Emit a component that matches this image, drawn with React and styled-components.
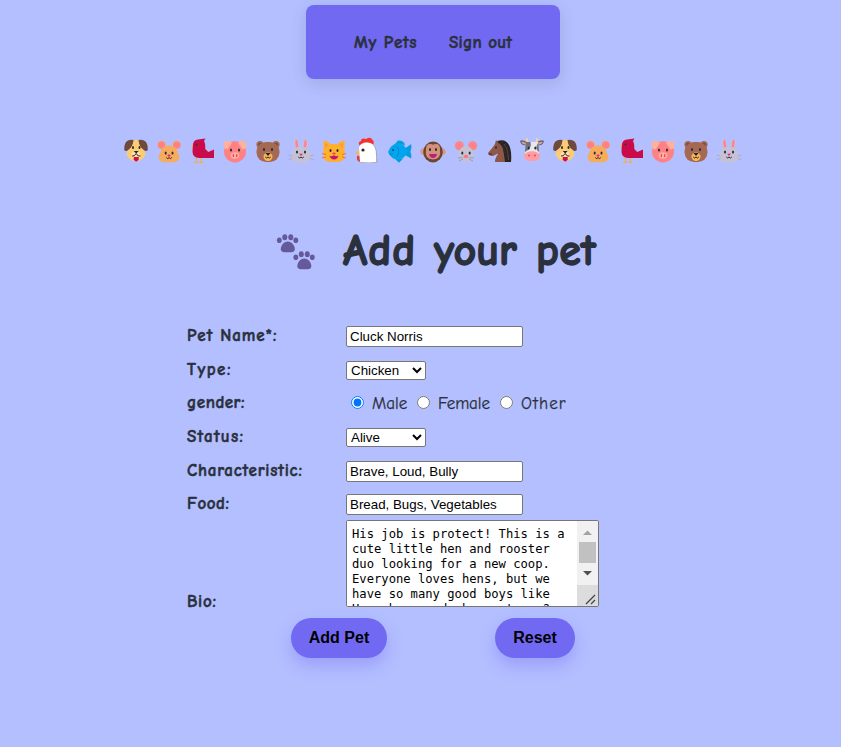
import React from "react";
import styled, { createGlobalStyle } from "styled-components";

const GlobalStyle = createGlobalStyle`
  * { box-sizing: border-box; }
  body {
    margin: 0;
    background: #b3bfff;
    color: #2a303c;
    font-family: "Comic Sans MS", "Comic Neue", "Noto Sans", sans-serif;
    font-size: 17px;
    overflow: hidden;
  }
`;

const Page = styled.div`
  display: flex;
  flex-direction: column;
  height: 747px;
  padding-top: 5px;
`;

const Nav = styled.nav`
  display: flex;
  gap: 32px;
  width: 254px;
  height: 74px;
  margin-left: 306px;
  padding: 28px 0 0 48px;
  border-radius: 8px;
  background: #7269f3;
  box-shadow: 0 4px 16px rgba(60, 60, 80, 0.16);
`;

const NavLink = styled.a`
  width: 63px;
  font-size: 17px;
  font-weight: 700;
  line-height: 20px;
  white-space: nowrap;
  letter-spacing: ${(p) => p.$track || 0}px;
  -webkit-text-stroke: 0.5px currentColor;
`;

const Animals = styled.div`
  display: flex;
  margin: 60px 0 0 120px;
  height: 24px;
`;

const Cell = styled.span`
  flex: none;
  display: flex;
  justify-content: center;
  width: 32.94px;

  svg { display: block; overflow: visible; }
`;

const TitleRow = styled.header`
  display: flex;
  align-items: flex-start;
  height: 60px;
  margin: 56px 0 0 276px;

  svg { margin-top: 15px; }
`;

const Title = styled.h1`
  display: flex;
  margin: 0 0 0 27px;
  font-size: 44px;
  line-height: 64px;
  font-weight: 700;
  -webkit-text-stroke: 1.3px currentColor;
`;

const Word = styled.span`
  width: ${(p) => p.$width}px;
  letter-spacing: ${(p) => p.$track || 0}px;
`;

const Form = styled.form`
  display: grid;
  grid-template-columns: 159px 260px;
  grid-template-rows: 33.5px 33.5px 33.5px 34px 33px 31px 90px;
  margin: 41px 0 0 187px;
`;

const Label = styled.label`
  align-self: ${(p) => (p.$bottom ? "end" : "start")};
  margin-top: 6px;
  margin-bottom: ${(p) => (p.$bottom ? -3 : 0)}px;
  font-size: 17px;
  font-weight: 700;
  line-height: 20px;
  white-space: nowrap;
  letter-spacing: ${(p) => p.$track || 0}px;
  -webkit-text-stroke: 0.5px currentColor;
`;

const Input = styled.input`
  width: 177px;
  height: 21px;
  margin: 6px 0 0;
  padding: 1px 2px 1px 3px;
  border: 1px solid #767676;
  border-radius: 2px;
  color: #000;
  font: 13.333px "Liberation Sans", Arial, sans-serif;
`;

const Select = styled.select`
  width: 80px;
  height: 19px;
  margin: 7px 0 0;
  border: 1px solid #767676;
  border-radius: 2px;
  background: #fff;
  color: #000;
  font: 13.333px "Liberation Sans", Arial, sans-serif;
`;

const Radios = styled.div`
  display: flex;
  padding-top: 6px;
  line-height: 22px;
`;

const Choice = styled.label`
  display: flex;
  width: ${(p) => p.$width}px;
  letter-spacing: ${(p) => p.$track || 0}px;
  -webkit-text-stroke: 0.25px currentColor;

  input { flex: none; width: 13px; height: 13px; margin: 3px 8px 0 5px; }
`;

const BioBox = styled.div`
  display: flex;
  width: 253px;
  height: 87px;
  margin-top: 1px;
  border: 1px solid #767676;
  border-radius: 2px;
  background: #fff;
  overflow: hidden;
`;

const BioText = styled.textarea`
  width: 230px;
  height: 85px;
  padding: 6px 0 0 5px;
  border: 0;
  outline: 0;
  resize: none;
  overflow: hidden;
  background: #fff;
  color: #000;
  font: 12.18px/15px "DejaVu Sans Mono", monospace;
  white-space: pre;
`;

const ScrollBar = styled.div`
  display: flex;
  flex-direction: column;
  align-items: center;
  width: 21px;
  background: #f1f1f1;

  svg { display: block; flex: none; }
`;

const Thumb = styled.div`
  width: 17px;
  height: 21px;
  background: #c1c1c1;
`;

const Grip = styled.div`
  width: 21px;
  height: 21px;
  background: #dcdcdc;
`;

const Actions = styled.div`
  display: flex;
  gap: 108px;
  margin: 9px 0 0 291px;
`;

const Button = styled.button`
  width: ${(p) => p.$width}px;
  height: 40px;
  padding: 0;
  border: 0;
  border-radius: 20px;
  background: #7269f3;
  box-shadow: 0 8px 16px rgba(114, 105, 243, 0.36);
  color: #000;
  font: 700 16px "Liberation Sans", Arial, sans-serif;
`;

const eyes = (a, b, y) => (
  <g fill="#252a31">
    <ellipse cx={a} cy={y} rx="1" ry="1.5" />
    <ellipse cx={b} cy={y} rx="1" ry="1.5" />
  </g>
);
const mouth = (y) => (
  <path d={`M9.3 ${y}q1.5 2 2.7 0q1.4 2 2.8 0`} fill="none" stroke="#2b2929" strokeWidth="1" />
);

const drawings = {
  dog: (
    <>
      <path d="M5 4Q7 1 12 1t7 3l2.500 12q-3 6-9.500 6T2.500 16Z" fill="#fccb76" />
      <path d="M9.500 1Q5 0 2.500 2.500 0 5 .2 11q2 2 4 0Q9 8 9.500 1M14.500 1q4.500-1 7 1.500Q24 5 23.800 11q-2 2-4 0Q15 8 14.500 1" fill="#6d4a3c" />
      <path d="M7.500 15q1-3.500 4.500-3.500t4.500 3.500v4q-4.500 3-9 0Z" fill="#ffe0a2" />
      {eyes(9, 15.5, 8.5)}
      <path d="M9.700 12h5L12.200 14.500Z" fill="#252525" />
      <path d="M8 17q2 1 4.200-2.500Q14 18 16.500 17" fill="none" stroke="#2d2929" />
      <path d="M9.700 18h5v2.600q-2.500 4-5 0Z" fill="#d40e44" />
    </>
  ),
  hamster: (
    <>
      <circle cx="4.700" cy="6" r="4.200" fill="#f9aa62" />
      <circle cx="19.700" cy="6" r="4.200" fill="#f9aa62" />
      <circle cx="4.500" cy="6" r="3.600" fill="#ff8181" />
      <circle cx="19.800" cy="6" r="3.600" fill="#ff8181" />
      <path d="M5 10q2-3.500 7-3.500t7 3.500l3.500 7q0 6.300-6.500 6.300H8q-6.500 0-6.500-6.300Z" fill="#f5ad5d" />
      {eyes(8.7, 15.5, 14)}
      <ellipse cx="12" cy="16.600" rx="1.600" ry="1.100" fill="#f52084" />
      {mouth(18.6)}
    </>
  ),
  bird: (
    <>
      <path d="M6.500 19v4M11.500 19v4M4 23.300h4M9 23.300h4.500" stroke="#f2ae49" strokeWidth="1.200" />
      <path d="M3 4.500.8 7.500l2.400.4Z" fill="#ffc247" />
      <path d="M2.800 6.500Q3 1 8 .4L15.500-.5 14 2q1.500 2.500 1.300 8l3 3 5.700-2.500V19H9q-6.500 0-6.500-6.500Z" fill="#ca0b4a" />
      <circle cx="6.500" cy="5.500" r="1" fill="#42283b" />
    </>
  ),
  pig: (
    <>
      <ellipse cx="12" cy="12.800" rx="11" ry="10.600" fill="#ff8184" />
      <path d="M1.200 2.500Q6 1 9 4L4.500 10.500Q-1 10 1.200 2.500M22.800 2.500Q18 1 15 4l4.500 6.500q5.500-.5 3.300-8" fill="#ffb19c" />
      {eyes(8, 16, 11)}
      <ellipse cx="12" cy="16.500" rx="4.300" ry="3.300" fill="#ffb19c" />
      <path d="M10.400 15.300v2.600M13.700 15.300v2.600" stroke="#e93672" strokeWidth="1.200" />
    </>
  ),
  bear: (
    <>
      <circle cx="4" cy="5.500" r="3.600" fill="#a56953" />
      <circle cx="20" cy="5.500" r="3.600" fill="#a56953" />
      <circle cx="4" cy="5.500" r="1.800" fill="#6d4a3c" />
      <circle cx="20" cy="5.500" r="1.800" fill="#6d4a3c" />
      <rect x=".5" y="3" width="23" height="20" rx="9.500" fill="#a56953" />
      <ellipse cx="12" cy="17.800" rx="4.500" ry="4.200" fill="#f9b45c" />
      {eyes(8, 16, 10.5)}
      <path d="M9.500 14h5L12 17Z" fill="#212121" />
      {mouth(18)}
    </>
  ),
  rabbit: (
    <>
      <path d="M6 9Q4 0 7 0q3 1 3.200 9M18 9Q20 0 17 0q-3 1-3.200 9" fill="#c8c4d9" />
      <path d="M6.800 8.500Q5.500.5 7.400.5 9.300 2 9.300 8.500M17.200 8.500q1.300-8-.6-8Q14.700 2 14.700 8.500" fill="#ff8392" />
      <path d="M2 16q2-8 10-8t10 8q0 7.300-6 7.300H8q-6 0-6-7.300" fill="#c5c2d5" />
      <path d="m-.5 16 4 1m-4 3.500 4-1M24.500 16l-4 1m4 3.500-4-1" stroke="#9b97ae" strokeWidth=".5" />
      {eyes(8, 16, 13)}
      <path d="M10.200 14.800h3.600L12 17Z" fill="#ed257d" />
      {mouth(18)}
    </>
  ),
  cat: (
    <>
      <path d="M1.500 1.500q3-.5 7 3.500h7q4-4 7-3.500v17q-2 4.500-8 4.500h-5q-6 0-8-4.500Z" fill="#ffb12e" />
      <path d="M3 4q2 0 3.500 2L3 10M21 4q-2 0-3.500 2L21 10" fill="#ff9b36" />
      <path d="m0 14.500 4 1M0 19l4-1M24 14.500l-4 1M24 19l-4-1" stroke="#f45d2e" strokeWidth=".8" />
      {eyes(8.5, 15.5, 11.5)}
      <ellipse cx="12" cy="14.500" rx="1.600" ry="1" fill="#e9356c" />
      <path d="M7.500 16.800q2 1 4.500-.5 2.500 1.500 4.500.5-1 3.700-4.500 3.700t-4.500-3.700" fill="#bd1770" />
    </>
  ),
  chicken: (
    <>
      <path d="M5 7Q2 3 6 2q0-3.500 5-2 5-2.500 6 .5 3 2 1 5.500" fill="#f8312f" />
      <path d="M5 10.500 0 14.500l5 2Z" fill="#fbb247" />
      <path d="M2 17q3-1 4 2l-1 4q-4-1-3-6" fill="#e23b38" />
      <path d="M4 8q2-4.500 8-4.500 8 0 9.500 8 1 9 1 12-8 1-17.500 0Z" fill="#a6a2ad" />
      <path d="M4 8q2-4.500 8-4.500 7 0 8.700 8 .7 7 .5 11.500-7 .8-16.200 0Z" fill="#fff" />
      <circle cx="8" cy="11" r="1.600" fill="#26292e" />
    </>
  ),
  fish: (
    <>
      <path d="m7 5 3-3.500q6-.5 7 4.500M7 20l4 3.700 4-4M15 11l8.200-6q.8 4-.8 8 1.600 3 .8 6.500L15 15Z" fill="#079be6" />
      <path d="M0 13q3-8.500 10-8.500 7 0 9.500 8-3 8-9.500 8Q3 20.500 0 13Z" fill="#00a6ed" />
      <path d="M9 7.500q3.500 5 0 10M1.500 15h3" fill="none" stroke="#1378bb" strokeWidth=".8" />
      <circle cx="5" cy="11" r="1" fill="#174168" />
    </>
  ),
  monkey: (
    <>
      <circle cx="3" cy="12.500" r="3.600" fill="#d99882" />
      <circle cx="21" cy="12.500" r="3.600" fill="#d99882" />
      <ellipse cx="12" cy="13" rx="9.800" ry="10.400" fill="#6d4534" />
      <path d="M5 10q0-5 4-5 3 0 3 1 0-1 3-1 4 0 4 5 1.500 10.500-7 10.500T5 10" fill="#d3907a" />
      {eyes(9, 15, 10.5)}
      <path d="M8 15h8q-1 4-4 4T8 15" fill="#bb1d80" />
    </>
  ),
  mouse: (
    <>
      <circle cx="5.500" cy="6.800" r="5" fill="#bbb6ca" />
      <circle cx="18.500" cy="6.800" r="5" fill="#bbb6ca" />
      <circle cx="5.300" cy="6.800" r="4.200" fill="#ff8289" />
      <circle cx="18.700" cy="6.800" r="4.200" fill="#ff8289" />
      <path d="M12 6.500q7.500 2 8 10-2 6-8 6.500-6-.5-8-6.500Q4.500 8.500 12 6.500" fill="#c5c2d5" />
      {eyes(8.3, 15.7, 14)}
      <ellipse cx="12" cy="17.500" rx="2.300" ry="1.800" fill="#ff777f" />
      <path d="m4 19 4.500-.5M5 22l4-2M20 19l-4.500-.5M19 22l-4-2" stroke="#898396" strokeWidth=".6" />
    </>
  ),
  horse: (
    <>
      <path d="M10 2.500Q18-1 22 6q3 6 2 17H12Z" fill="#292526" />
      <path d="m8 5 1-4 3 3q4 3 4.500 8 1 7 1.500 11H8q0-5 4-9l-6 3q-5 0-5-3l5-6Z" fill="#8d5847" />
      <path d="M11 2.500q5 2 6.500 9l1.500 8" fill="none" stroke="#30282a" strokeWidth="2" />
      <path d="M17 5q4 4 4.500 16" fill="none" stroke="#6b4a3f" strokeWidth=".8" />
      <ellipse cx="9" cy="8.500" rx=".8" ry="1.300" fill="#20262a" />
      <path d="M2 15h3" stroke="#3a2928" />
    </>
  ),
  cow: (
    <>
      <path d="M8.500 3.500Q5.500 2 7.500-.8M15.500 3.500q3-1.500 1-4.300" fill="none" stroke="#ffd694" strokeWidth="1.600" />
      <path d="M7 3Q2 0 0 2q1 5 6 4M17 3q5-3 7-1-1 5-6 4" fill="#686673" />
      <path d="M6 4.500Q3 2 1.500 3q1 2.500 4.500 2.500M18 4.500q3-2.500 4.500-1.500-1 2.500-4.500 2.500" fill="#e6a39a" />
      <path d="M5.500 3h13l.5 10q0 7-7 8-7-1-7-8Z" fill="#e8e7ee" />
      <path d="M5.500 3h5q2 6-5.500 10ZM18.500 3l.5 10q-4-3-2-7Z" fill="#72717d" />
      {eyes(8.7, 15.3, 9)}
      <ellipse cx="12" cy="17.200" rx="8" ry="5" fill="#ff9da0" />
      <circle cx="9" cy="16.500" r="1.100" fill="#e54c6e" />
      <circle cx="15" cy="16.500" r="1.100" fill="#e54c6e" />
    </>
  ),
};

const parade = [
  "dog", "hamster", "bird", "pig", "bear", "rabbit", "cat", "chicken", "fish", "monkey",
  "mouse", "horse", "cow", "dog", "hamster", "bird", "pig", "bear", "rabbit",
];

const Paw = ({ x, y }) => (
  <g transform={`translate(${x} ${y})`}>
    <ellipse cx="2.500" cy="6" rx="2.400" ry="2.800" />
    <ellipse cx="8" cy="3" rx="2.500" ry="3" />
    <ellipse cx="14" cy="3" rx="2.500" ry="3" />
    <ellipse cx="19" cy="6" rx="2.400" ry="2.800" />
    <path d="M11 7.300c4 0 7 4 7 7.700 0 2-1.700 3-3.500 3h-7C5.700 18 4 17 4 15c0-3.700 3-7.700 7-7.700Z" />
  </g>
);

const bio = `His job is protect! This is a
cute little hen and rooster
duo looking for a new coop.
Everyone loves hens, but we
have so many good boys like
Hans have and who wants a ?`;

export default function App() {
  return (
    <Page>
      <GlobalStyle />
      <Nav>
        <NavLink $track={0.75}>My Pets</NavLink>
        <NavLink $track={0.25}>Sign out</NavLink>
      </Nav>
      <Animals>
        {parade.map((name, i) => (
          <Cell key={i}>
            <svg width="24" height="24" viewBox="0 0 24 24">{drawings[name]}</svg>
          </Cell>
        ))}
      </Animals>
      <TitleRow>
        <svg width="40" height="37" fill="#65599a">
          <Paw x={0.8} y={0.3} />
          <Paw x={17.3} y={17.3} />
        </svg>
        <Title>
          <Word $width={91} $track={1}>Add</Word>
          <Word $width={102} $track={0}>your</Word>
          <Word $width={64} $track={0.4}>pet</Word>
        </Title>
      </TitleRow>
      <Form>
        <Label $track={0.95}>Pet Name*:</Label>
        <Input defaultValue="Cluck Norris" />
        <Label $track={1.5}>Type:</Label>
        <Select><option>Chicken</option></Select>
        <Label $track={0.5}>gender:</Label>
        <Radios>
          <Choice $width={66}><input type="radio" name="gender" defaultChecked />Male</Choice>
          <Choice $width={83} $track={-0.1}><input type="radio" name="gender" />Female</Choice>
          <Choice $width={80} $track={1.1}><input type="radio" name="gender" />Other</Choice>
        </Radios>
        <Label $track={1.3}>Status:</Label>
        <Select><option>Alive</option></Select>
        <Label $track={0.8}>Characteristic:</Label>
        <Input defaultValue="Brave, Loud, Bully" />
        <Label $track={0.55}>Food:</Label>
        <Input defaultValue="Bread, Bugs, Vegetables" />
        <Label $bottom $track={0.7}>Bio:</Label>
        <BioBox>
          <BioText defaultValue={bio} wrap="off" />
          <ScrollBar>
            <svg width="21" height="21"><path d="M6 14 10.500 9.500 15 14Z" fill="#a3a3a3" /></svg>
            <Thumb />
            <svg width="21" height="22"><path d="M6 8h9l-4.500 4.500Z" fill="#505050" /></svg>
            <Grip>
              <svg width="21" height="21"><path d="m9 19 9-9M14 19l4-4" stroke="#444" strokeWidth="1.300" /></svg>
            </Grip>
          </ScrollBar>
        </BioBox>
      </Form>
      <Actions>
        <Button type="button" $width={96}>Add Pet</Button>
        <Button type="button" $width={80}>Reset</Button>
      </Actions>
    </Page>
  );
}
